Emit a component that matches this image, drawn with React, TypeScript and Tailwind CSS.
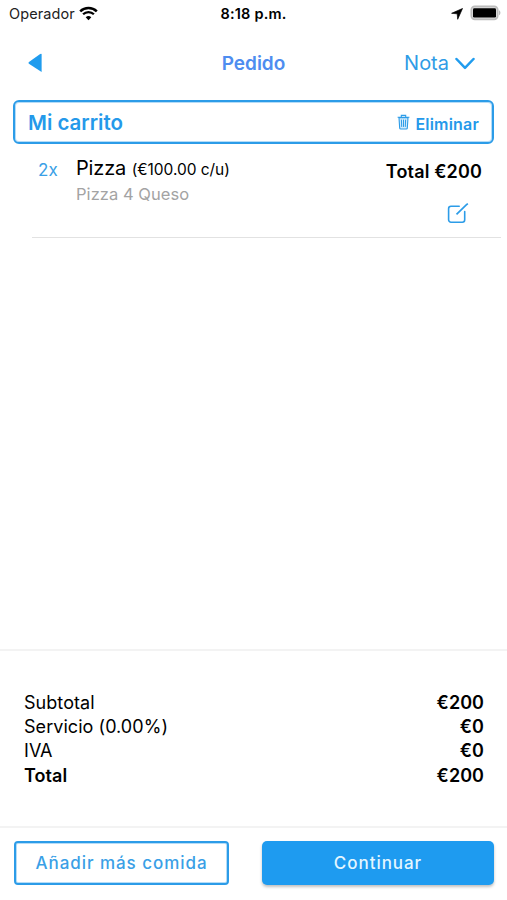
import type { ReactNode } from "react";

type CartItem = {
  name: string;
  detail: string;
  quantity: number;
  price: number;
};

const items: CartItem[] = [
  { name: "Pizza", detail: "Pizza 4 Queso", quantity: 2, price: 100 },
];

const subtotal = items.reduce((sum, item) => sum + item.quantity * item.price, 0);

function StatusBar() {
  return (
    <div className="grid h-7 shrink-0 grid-cols-3 items-center text-[14px] leading-7 text-black">
      <div className="flex items-center gap-[4px] pl-[9px]">
        <span className="text-[14.5px] tracking-[0.1px] text-[#222]">Operador</span>
        <svg width="19" height="15" viewBox="0 0 19 15" className="-mt-[2px]" fill="none" stroke="#000">
          <path d="M1.2 5.3a11.8 11.8 0 0 1 16.6 0" strokeWidth="2.5" />
          <path d="M4.1 8.3a7.7 7.7 0 0 1 10.8 0" strokeWidth="2.3" />
          <path d="M9.5 14.2 6.7 11.3a4 4 0 0 1 5.6 0z" fill="#000" stroke="none" />
        </svg>
      </div>
      <div className="text-center text-[14.5px] font-semibold tracking-[0.2px]">8:18 p.m.</div>
      <div className="flex items-center justify-end gap-[7px] pr-[6px]">
        <svg width="12" height="12" viewBox="0 0 12 12">
          <path d="M11.5.5 6.7 11.3 6.2 5.8.6 5.3z" fill="#000" stroke="#000" strokeWidth=".7" strokeLinejoin="round" />
        </svg>
        <svg width="31" height="16" viewBox="0 0 31 16" className="-mt-[2px]">
          <rect x="1.3" y="1.3" width="26.4" height="13" rx="3.5" fill="#ddd" stroke="#bcbcbc" strokeWidth="1.7" />
          <rect x="3" y="3.2" width="23" height="9.4" rx="1.3" fill="#000" />
          <path d="M29 5.3c1.9.8 1.9 4.2 0 5z" fill="#bcbcbc" />
        </svg>
      </div>
    </div>
  );
}

function NavBar() {
  return (
    <header className="grid h-[70px] shrink-0 grid-cols-3 items-center">
      <button type="button" aria-label="Volver" className="w-fit pl-[28px]">
        <svg width="14" height="20" viewBox="0 0 14 20">
          <path d="M13.6.9v18L1.3 11.1q-1.6-1.2 0-2.4L11.8 1.2q.9-.6 1.8-.3z" fill="#209cee" />
        </svg>
      </button>
      <h1 className="pt-[2px] text-center text-[19px] font-semibold text-[#4e8df0]">Pedido</h1>
      <button type="button" className="flex items-center justify-end gap-[6px] pr-[32px] text-[20px] text-[#2f9ce6]">
        Nota
        <svg width="20" height="13" viewBox="0 0 20 13" fill="none" stroke="#209cee" strokeWidth="2.5">
          <path d="M1.5 2 10 10.8 18.5 2" strokeLinecap="round" strokeLinejoin="round" />
        </svg>
      </button>
    </header>
  );
}

function TrashIcon() {
  return (
    <svg width="13" height="16" viewBox="0 0 13 16" className="-mt-[3px]" fill="none" stroke="#2c9ce8">
      <path d="M2 3.6l.7 10.5q.1.9 1 .9h5.6q.9 0 1-.9L11 3.6z" fill="#d3ebfb" strokeWidth="1.1" />
      <path d="M.6 3.3h11.8M4.3 3V1.4h4.4V3" strokeWidth="1.1" />
      <path d="m4.4 5.6.3 7.3M6.5 5.6v7.3M8.6 5.6l-.3 7.3" strokeWidth="1" />
    </svg>
  );
}

function EditIcon() {
  return (
    <svg width="22" height="22" viewBox="0 0 22 22" fill="none" stroke="#2c9ce8" strokeWidth="1.6">
      <path d="M12.2 3.3H4A2.4 2.4 0 0 0 1.6 5.7v11.1A2.4 2.4 0 0 0 4 19.2h11.3a2.4 2.4 0 0 0 2.4-2.4V8.6" strokeLinecap="round" />
      <path d="M9.5 11.4 19 2.2l1.8-1.6" strokeWidth="1.7" />
    </svg>
  );
}

function CartRow({ item }: { item: CartItem }) {
  return (
    <article className="mr-[6px] ml-8 flex h-[94px] border-b border-[#e2e2e2] pl-[6px]">
      <span className="w-[38px] pt-[16px] text-[17px] leading-5 text-[#3a9fe6]">{item.quantity}x</span>
      <div className="flex-1 pt-[12px]">
        <h3 className="text-[20px] leading-6 tracking-[-0.15px] text-black">
          {item.name}{" "}
          <span className="text-[15.5px] tracking-[-0.05px]">(€{item.price.toFixed(2)} c/u)</span>
        </h3>
        <p className="mt-[2px] text-[16.5px] leading-5 tracking-[0.05px] text-[#a3a3a3]">{item.detail}</p>
      </div>
      <div className="flex flex-col items-end pt-[18px] pr-[19px]">
        <span className="text-[18px] leading-5 font-semibold tracking-[0.15px] text-black">
          Total €{item.quantity * item.price}
        </span>
        <button type="button" aria-label="Editar" className="mt-[21px] mr-[13px]">
          <EditIcon />
        </button>
      </div>
    </article>
  );
}

function SummaryRow({ label, children }: { label: ReactNode; children: ReactNode }) {
  return (
    <div className="flex h-[24.4px] items-center justify-between">
      <dt>{label}</dt>
      <dd className="font-semibold">{children}</dd>
    </div>
  );
}

export default function App() {
  return (
    <div className="flex h-[900px] w-[507px] flex-col overflow-hidden bg-white font-['Inter','Liberation_Sans',sans-serif]">
      <StatusBar />
      <NavBar />
      <main className="flex-1 pt-[2px]">
        <div className="mr-[13px] ml-[13px] flex h-[44px] items-center justify-between rounded-[6px] border-2 border-[#2c9ce8] pr-[13px] pl-[13px] text-[#2499ea] shadow-[inset_0_0_0_1px_rgba(44,156,232,0.35)]">
          <h2 className="pt-[2px] text-[20.5px] font-semibold">Mi carrito</h2>
          <button type="button" className="flex items-center gap-[5px] pt-[3px] text-[16px] font-semibold tracking-[0.2px]">
            <TrashIcon />
            Eliminar
          </button>
        </div>
        {items.map((item) => (
          <CartRow key={item.name} item={item} />
        ))}
      </main>

      <dl className="h-[177px] shrink-0 border-t-2 border-[#f3f3f3] pt-[39px] pr-[23px] pl-[24px] text-[18px] tracking-[0.05px] text-black">
        <SummaryRow label="Subtotal">€{subtotal}</SummaryRow>
        <SummaryRow label="Servicio (0.00%)">€0</SummaryRow>
        <SummaryRow label="IVA">€0</SummaryRow>
        <SummaryRow label={<span className="font-semibold">Total</span>}>€{subtotal}</SummaryRow>
      </dl>

      <footer className="flex h-[74px] shrink-0 items-start gap-[33px] border-t-2 border-[#f3f3f3] pt-[13px] pr-[13px] pl-[14px] text-[17px] font-medium">
        <button type="button" className="h-[44px] w-[215px] rounded-[4px] border-2 border-[#2c9ce8] pt-[2px] tracking-[0.95px] text-[#3a9fe6] shadow-[inset_0_0_0_1px_rgba(44,156,232,0.35)]">
          Añadir más comida
        </button>
        <button type="button" className="h-[44px] flex-1 rounded-[5px] bg-[#1e9bf0] pt-[2px] tracking-[0.95px] text-[#e3f6ff] shadow-[0_2px_3px_rgba(0,0,0,0.25)]">
          Continuar
        </button>
      </footer>
    </div>
  );
}
